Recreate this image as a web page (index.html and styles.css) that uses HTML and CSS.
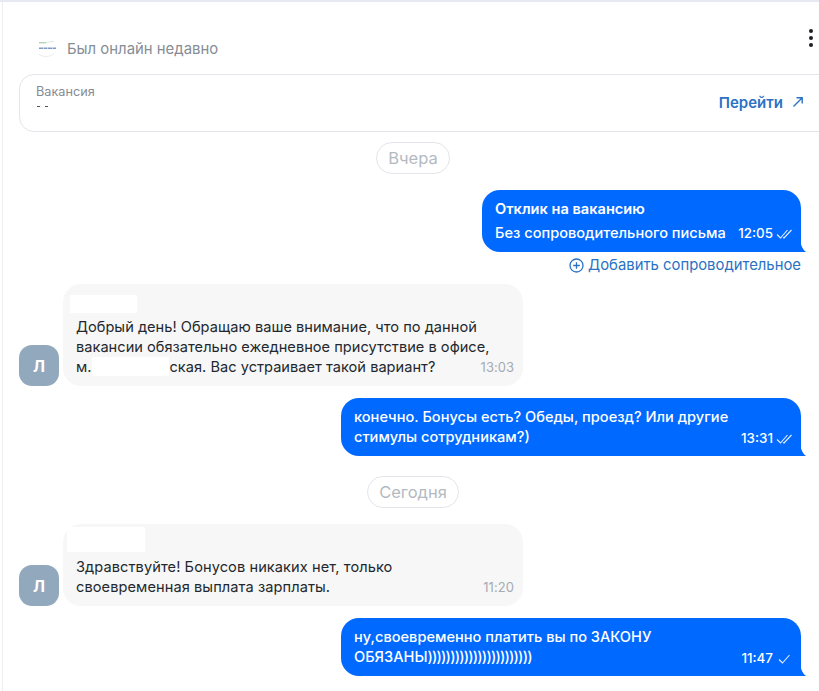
FILE: index.html
```html
<!DOCTYPE html>
<html lang="ru">
<head>
<meta charset="utf-8">
<title>Чат</title>
<link rel="stylesheet" href="styles.css">
</head>
<body>
<main class="chat">
  <header class="head">
    <svg class="logo" width="24" height="20" viewBox="0 0 24 20" aria-hidden="true">
      <path d="M5 15.500c5 3 11 2.500 15-1" fill="none" stroke="#e9ecf1" stroke-width="1"/>
      <path d="M5 3.800h7" stroke="#9cc49c" stroke-width="1"/>
      <path d="M12 3.400l8-1" stroke="#dde9dd" stroke-width="1"/>
      <path d="M5 9.300h17" stroke="#7f9cc9" stroke-width="1.500" stroke-dasharray="4 .5"/>
    </svg>
    <span class="status">Был онлайн недавно</span>
    <button class="more" aria-label="Меню"><i></i><i></i><i></i></button>
  </header>

  <section class="vacancy">
    <div class="vacancy-info">
      <div class="vacancy-label">Вакансия</div>
      <div class="vacancy-name"><i></i><i></i></div>
    </div>
    <a class="go">Перейти
      <svg width="12" height="12" viewBox="0 0 12 12" aria-hidden="true"><path d="M1.500 10.500L10 2M4.500 1.800h5.700v5.700" fill="none" stroke="#2a72c4" stroke-width="1.400"/></svg>
    </a>
  </section>

  <div class="date date-first"><span>Вчера</span></div>

  <div class="msg-out first">
    <div class="bubble out">
      <b class="out-title">Отклик на вакансию</b>
      <div class="out-row"><span>Без сопроводительного письма</span>
        <span class="time">12:05
          <svg class="check" width="17" height="10" viewBox="0 0 17 10" aria-hidden="true"><path d="M1 5.500l3.500 3.500 7-8M7 8.500l1 .5 7.500-8" fill="none" stroke="#e6f0ff" stroke-width="1.100"/></svg>
        </span>
      </div>
    </div>
  </div>
  <a class="add">
    <svg width="15" height="15" viewBox="0 0 15 15" aria-hidden="true"><circle cx="7.500" cy="7.500" r="6.500" fill="none" stroke="#2a72c4" stroke-width="1.300"/><path d="M7.500 4.200v6.600M4.200 7.500h6.600" stroke="#2a72c4" stroke-width="1.300"/></svg>
    Добавить сопроводительное</a>

  <div class="msg-in m1">
    <div class="avatar">Л</div>
    <div class="bubble in">
      <div class="mask-name"></div>
      <p>Добрый день! Обращаю ваше внимание, что по данной<br>вакансии обязательно ежедневное присутствие в офисе,<br>м.<span class="mask-inline"></span>ская. Вас устраивает такой вариант?</p>
      <span class="time-in">13:03</span>
    </div>
  </div>

  <div class="msg-out m2">
    <div class="bubble out wide">
      <p>конечно. Бонусы есть? Обеды, проезд? Или другие<br>стимулы сотрудникам?)</p>
      <span class="time time-abs">13:31
        <svg class="check" width="17" height="10" viewBox="0 0 17 10" aria-hidden="true"><path d="M1 5.500l3.500 3.500 7-8M7 8.500l1 .5 7.500-8" fill="none" stroke="#e6f0ff" stroke-width="1.100"/></svg>
      </span>
    </div>
  </div>

  <div class="date date-second"><span>Сегодня</span></div>

  <div class="msg-in m3">
    <div class="avatar">Л</div>
    <div class="bubble in short">
      <div class="mask-name long"></div>
      <p>Здравствуйте! Бонусов никаких нет, только<br>своевременная выплата зарплаты.</p>
      <span class="time-in">11:20</span>
    </div>
  </div>

  <div class="msg-out m4">
    <div class="bubble out wide">
      <p>ну,своевременно платить вы по ЗАКОНУ<br>ОБЯЗАНЫ<span class="parens">)))))))))))))))))))))))</span></p>
      <span class="time time-abs">11:47
        <svg class="check" width="17" height="10" viewBox="0 0 17 10" aria-hidden="true"><path d="M3 5.500l3.500 3.500 7-8" fill="none" stroke="#e6f0ff" stroke-width="1.100"/></svg>
      </span>
    </div>
  </div>
</main>
</body>
</html>
```
FILE: styles.css
```css
* { box-sizing: border-box; }
html, body { margin: 0; height: 100%; background: #fff; }
body { overflow: hidden; font-family: Inter, "Noto Sans", sans-serif; color: #20262e; }
p { margin: 0; }

.chat {
  height: 691px;
  border-top: 2px solid #e6e9f2;
  padding-left: 19px;
  position: relative;
  background: #fff;
}
.chat::before {
  content: "";
  position: absolute;
  left: 2px;
  top: 0;
  bottom: 0;
  width: 1px;
  background: #eceef2;
}

.head { height: 72px; display: flex; align-items: center; padding-top: 21px; position: relative; }
.logo { margin-left: 15px; margin-right: 9px; margin-top: 1px; flex: none; }
.status { font-size: 14.900px; color: #868d95; }
.more { position: absolute; right: 0; top: 27px; width: 16px; height: 20px; padding: 0; border: 0; background: none; display: flex; flex-direction: column; align-items: center; gap: 3px; }
.more i { width: 4px; height: 4px; border-radius: 50%; background: #1c1f24; }

.vacancy {
  height: 58px;
  margin-right: -16px;
  border: 1px solid #e3e5ea;
  border-radius: 15px;
  display: flex;
  align-items: center;
  justify-content: space-between;
  padding: 0 30px 0 16px;
}
.vacancy-info { align-self: flex-start; padding-top: 9px; }
.vacancy-label { font-size: 12.700px; line-height: 15px; color: #858c94; }
.vacancy-name { display: flex; gap: 5px; margin-top: 7px; height: 3px; padding-left: 1px; }
.vacancy-name i { width: 3px; height: 1px; background: #555; }
.go { font-size: 15px; font-weight: 600; color: #2a72c4; display: flex; align-items: center; gap: 9px; margin-top: -2px; }

.date { display: flex; justify-content: center; }
.date span { border: 1px solid #e3e5ea; border-radius: 16px; height: 32px; display: flex; align-items: center; font-size: 16.500px; color: #b4bac1; background: #fff; }
.date-first { margin-top: 10px; width: 788px; }
.date-first span { padding: 0 11px; }
.date-second { margin-top: 20px; width: 788px; }
.date-second span { padding: 0 11px; }

.msg-out { display: flex; justify-content: flex-end; padding-right: 18px; }
.first { margin-top: 16px; }
.m2 { margin-top: 12px; }
.m4 { margin-top: 12px; }

.bubble { position: relative; font-size: 14.600px; line-height: 20px; }
.out { background: #0069ff; color: #fff; border-radius: 18px 18px 0 18px; font-weight: 450; }
.out::after {
  content: "";
  position: absolute;
  right: -5px;
  bottom: 0;
  width: 6px;
  height: 12px;
  background: #0069ff;
  clip-path: path("M0 0 C1 6 3 10 6 12 L0 12 Z");
}
.first .out { width: 319px; height: 62px; padding: 9px 8px 0 13px; }
.out-title { display: block; font-weight: 600; font-size: 14.600px; }
.out-row { display: flex; justify-content: space-between; margin-top: 4px; }
.time { font-size: 13.400px; display: flex; align-items: center; gap: 3px; white-space: nowrap; }
.check { margin-top: 2px; }
.wide { width: 460px; height: 58px; padding: 9px 8px 0 13px; }
.time-abs { position: absolute; right: 8px; bottom: 8px; }
.parens { letter-spacing: -.85px; }

.add { display: flex; justify-content: flex-end; align-items: center; gap: 4px; padding-right: 18px; margin-top: 3px; height: 20px; font-size: 14.850px; color: #2a72c4; }

.msg-in { display: flex; align-items: flex-end; gap: 4px; }
.m1 { margin-top: 9px; }
.m3 { margin-top: 16px; }
.avatar { width: 40px; height: 41px; border-radius: 13px; background: #92a8bc; color: #fff; font-size: 16px; font-weight: 700; display: flex; align-items: center; justify-content: center; flex: none; position: relative; z-index: 1; }
.in { width: 460px; height: 102px; background: #f7f7f7; border-radius: 18px; padding: 33px 6px 0 13px; color: #23282e; letter-spacing: .02px; }
.short { height: 82px; letter-spacing: .08px; }
.mask-name { position: absolute; left: 7px; top: 11px; width: 67px; height: 18px; background: #fff; }
.mask-name.long { left: 4px; top: 3px; width: 78px; height: 25px; }
.mask-inline { display: inline-block; width: 77px; height: 19px; background: #fff; vertical-align: top; margin-left: 1px; }
.time-in { position: absolute; right: 9px; bottom: 9px; font-size: 13px; color: #a5abb2; }
```
